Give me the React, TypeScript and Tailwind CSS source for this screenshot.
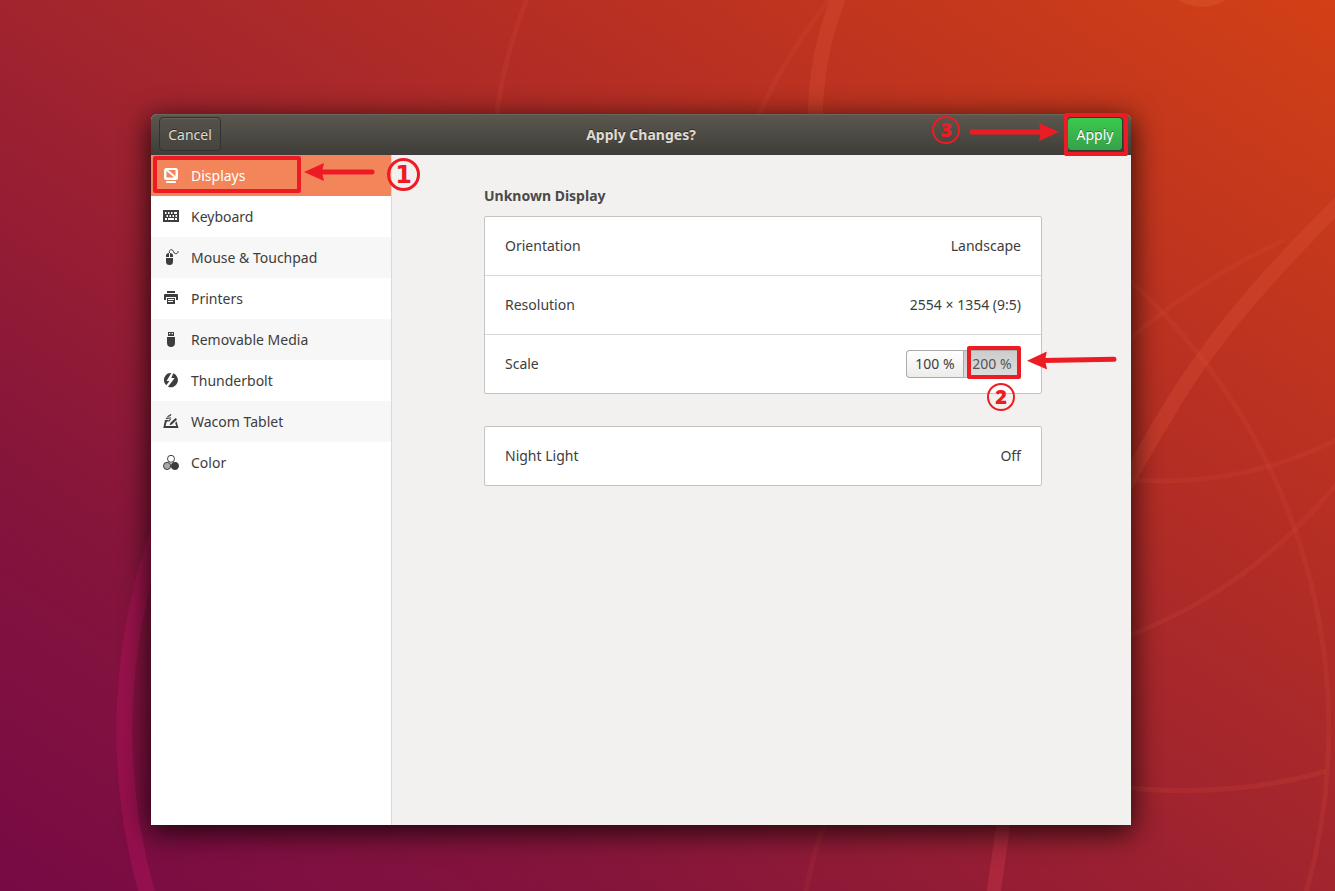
import React from "react";
import clsx from "clsx";

const DisplaysIcon = () => (
  <svg viewBox="0 0 16 16" className="w-4 h-4 -mt-px shrink-0" fill="currentColor">
    <path
      fillRule="evenodd"
      d="M3.500 1h9A2.500 2.500 0 0 1 15 3.500v7a2.500 2.500 0 0 1-2.500 2.500h-9A2.500 2.500 0 0 1 1 10.500v-7A2.500 2.500 0 0 1 3.500 1zM5.200 3l7.300 6V3zM3.500 4v6.500h7.600z"
    />
    <rect x="3" y="14" width="10" height="2" rx="0.6" />
  </svg>
);

const KeyboardIcon = () => (
  <svg viewBox="0 0 16 16" className="w-4 h-4 -mt-px shrink-0" fill="currentColor">
    <path
      fillRule="evenodd"
      d="M0 2h16v12H0zM2 4v2h1.500V4zM5 4v2h1.500V4zM8 4v2h1.500V4zM11 4v2h3V4zM3.500 7v2H5V7zM6.500 7v2H8V7zM9.500 7v2H11V7zM12.500 7v2H14V7zM2 10v2h2v-2zM5 10v2h6v-2zM12 10v2h2v-2z"
    />
  </svg>
);

const MouseIcon = () => (
  <svg viewBox="0 0 16 16" className="w-4 h-4 -mt-px shrink-0" fill="currentColor">
    <path d="M6 4v4H3V6.500C3 5 4.200 4 6 4zM7 4v4h3V6.500C10 5 8.800 4 7 4zM3 9h7v3.500a3.500 3.500 0 0 1-7 0z" />
    <path
      d="M6.500 4C5.800 1.500 7 .7 8.500.7c2.500 0 1.500 4 4.200 4 1.800 0 2.300-1 2.500-2.500"
      fill="none"
      stroke="currentColor"
    />
  </svg>
);

const PrinterIcon = () => (
  <svg viewBox="0 0 16 16" className="w-4 h-4 -mt-px shrink-0" fill="currentColor">
    <path d="M4 1h8v2H4zM2 4h12a1 1 0 0 1 1 1v5h-2V7H3v3H1V5a1 1 0 0 1 1-1z" />
    <path fillRule="evenodd" d="M4 8h8v6H4zM5 9v1h6V9zM5 11v1h5v-1z" />
  </svg>
);

const UsbIcon = () => (
  <svg viewBox="0 0 16 16" className="w-4 h-4 -mt-px shrink-0" fill="currentColor">
    <path fillRule="evenodd" d="M5 1h6v4H5zM6 2v1.200h1.300V2zM8.700 2v1.200H10V2z" />
    <path d="M4 6h8v6c0 2.500-1.600 4-4 4s-4-1.500-4-4z" />
  </svg>
);

const ThunderboltIcon = () => (
  <svg viewBox="0 0 16 16" className="w-4 h-4 -mt-px shrink-0" fill="currentColor">
    <path d="M8.300 1A7 7 0 0 0 3.300 13.200L6.500 9H3.600zM10.300 1.300L8.300 6h3.400L5 14.800A7 7 0 0 0 10.300 1.300z" />
  </svg>
);

const TabletIcon = () => (
  <svg viewBox="0 0 16 16" className="w-4 h-4 -mt-px shrink-0" fill="currentColor">
    <path
      fillRule="evenodd"
      d="M2 7h3.500v1.600H3.700L2.600 13h10.600l-1-3 1.300-1.700L15.500 15H.3z"
    />
    <path d="M12.500 5l1.500 1.400-5.200 5-2.200.8.700-2.200z" />
    <path
      d="M3 5.700c1.500-1.200 3.500.3 5-1.100M4.500 3.800C6 2.500 7 3.300 8 1.300M6.200 8.500c-.7-1.400.8-1.200 1.500-2.300"
      fill="none"
      stroke="currentColor"
      strokeWidth="1.200"
    />
  </svg>
);

const ColorIcon = () => (
  <svg viewBox="0 0 16 16" className="w-4 h-4 -mt-px shrink-0" stroke="currentColor">
    <circle cx="8" cy="4.800" r="3.500" fill="#fff" />
    <circle cx="4.100" cy="11.900" r="3.600" fill="#a9a9a9" />
    <circle cx="11.900" cy="11.900" r="3.600" fill="currentColor" />
  </svg>
);

const panels = [
  { name: "Displays", Icon: DisplaysIcon },
  { name: "Keyboard", Icon: KeyboardIcon },
  { name: "Mouse & Touchpad", Icon: MouseIcon },
  { name: "Printers", Icon: PrinterIcon },
  { name: "Removable Media", Icon: UsbIcon },
  { name: "Thunderbolt", Icon: ThunderboltIcon },
  { name: "Wacom Tablet", Icon: TabletIcon },
  { name: "Color", Icon: ColorIcon },
];

const Wallpaper = () => (
  <svg
    viewBox="0 0 1335 891"
    preserveAspectRatio="none"
    className="absolute inset-0 w-full h-full"
    fill="none"
    aria-hidden="true"
  >
    <g stroke="#dc5038" strokeOpacity="0.32" strokeWidth="15">
      <path d="M840-6C822 40 816 75 815 120" />
      <path d="M1342 201C1270 272 1215 335 1175 400S1030 640 1003 825" />
    </g>
    <path
      d="M1004 820L993 897"
      stroke="#c03244"
      strokeOpacity="0.5"
      strokeWidth="14"
    />
    <path
      d="M200 440A596 596 0 0 0 149 900"
      stroke="#ad1158"
      strokeOpacity="0.5"
      strokeWidth="16"
    />
    <g stroke="#d6493c" strokeOpacity="0.2" strokeWidth="5">
      <path d="M1120 272A604 604 0 0 1 1304 900" />
      <path d="M528-4Q504 55 496 120" />
      <path d="M832-4Q782 60 758 118" />
      <path d="M1120 479Q1240 490 1340 438" />
      <path d="M1120 639Q1250 592 1340 480" />
      <path d="M1120 787Q1230 799 1326 771" />
      <path d="M1120 348Q1190 284 1284 240" />
      <path d="M826 820Q814 850 805 896" strokeOpacity="0.12" />
    </g>
    <circle cx="1202" cy="-36" r="43" fill="#d94f26" fillOpacity="0.7" />
  </svg>
);

// Points right, rotate it for the other directions
const Arrow = ({ className }: { className: string }) => (
  <svg
    viewBox="0 0 90 18"
    className={clsx("absolute pointer-events-none z-10 w-[90px] h-[18px]", className)}
    aria-hidden="true"
  >
    <path d="M3 9H74" stroke="#ed1c24" strokeWidth="5" strokeLinecap="round" />
    <path d="M70 0L90 9L70 18L72 9z" fill="#ed1c24" />
  </svg>
);

const ShortArrow = ({ className }: { className: string }) => (
  <svg
    viewBox="0 0 72 18"
    className={clsx("absolute pointer-events-none z-10 w-[72px] h-[18px]", className)}
    aria-hidden="true"
  >
    <path d="M68 9H16" stroke="#ed1c24" strokeWidth="5" strokeLinecap="round" />
    <path d="M20 0L0 9L20 18L18 9z" fill="#ed1c24" />
  </svg>
);

const StepNumber = ({ n, className }: { n: number; className: string }) => (
  <span
    className={clsx(
      "absolute z-10 flex items-center justify-center rounded-full border-[#ed1c24] text-[#ed1c24] pointer-events-none",
      className
    )}
  >
    {n}
  </span>
);

const Highlight = ({ className }: { className: string }) => (
  <span
    className={clsx(
      "absolute z-10 rounded-xs border-4 border-[#ed1c24] pointer-events-none",
      className
    )}
  />
);

const Row = ({ label, children }: { label: string; children: React.ReactNode }) => (
  <div className="flex items-center justify-between h-[59px] px-5 border-b border-[#d8d8d8] last:h-[58px] last:border-b-0">
    <span>{label}</span>
    {children}
  </div>
);

const HeaderBar = () => (
  <header className="grid grid-cols-[1fr_auto_1fr] items-start h-[41px] px-2 pt-[3px] rounded-t-md bg-linear-to-b from-[#5c584f] to-[#3e3d39] shadow-[inset_0_1px_0_#69665e] text-[#dfdbd2]">
    <button className="h-[34px] w-[62px] pt-0.5 rounded-sm border border-[#32312d] bg-linear-to-b from-[#55524a] to-[#45443f] shadow-[inset_0_1px_0_#65625a] [text-shadow:0_-1px_#2b2a27]">
      Cancel
    </button>
    <h1 className="font-bold leading-9 [text-shadow:0_-1px_#2b2a27]">Apply Changes?</h1>
    <div className="relative justify-self-end">
      <button className="block h-[34px] w-14 pt-0.5 rounded-sm border border-[#2c3b2b] bg-linear-to-b from-[#3ac94e] to-[#37a14a] text-white [text-shadow:0_-1px_#2a7436]">
        Apply
      </button>
      <Highlight className="-left-[3px] -right-[5px] -top-1 -bottom-[5px]" />
      <Arrow className="right-[64px] top-[6px]" />
      <StepNumber n={3} className="w-7 h-7 right-[163px] -top-px border-2 text-xl font-black" />
    </div>
  </header>
);

const Sidebar = () => (
  <nav className="w-[241px] shrink-0 bg-white border-r border-[#dcdad7]">
    {panels.map(({ name, Icon }, i) => (
      <a
        key={name}
        href="#"
        className={clsx(
          "relative flex items-center h-[41px] px-3 gap-3",
          i === 0 ? "bg-[#f3855b] text-white" : i % 2 === 0 && "bg-[#f7f7f7]"
        )}
      >
        <Icon />
        {name}
        {i === 0 && (
          <>
            <Highlight className="left-[2px] top-px w-[148px] h-[37px]" />
            <ShortArrow className="left-[153px] top-[8px]" />
            <StepNumber
              n={1}
              className="w-[33px] h-[33px] left-[236px] top-[3px] border-3 text-2xl font-bold font-['DejaVu_Sans',sans-serif]"
            />
          </>
        )}
      </a>
    ))}
  </nav>
);

const DisplaySettings = () => (
  <main className="flex-1 pl-[92px] pr-[89px] pt-[31px]">
    <h2 className="font-bold leading-5 mb-[10px] text-[#4c4a48]">Unknown Display</h2>
    <section className="bg-white border border-[#c6c4c1] rounded-xs">
      <Row label="Orientation">
        <span>Landscape</span>
      </Row>
      <Row label="Resolution">
        <span>2554 × 1354 (9:5)</span>
      </Row>
      <Row label="Scale">
        <div className="relative flex h-7" role="group" aria-label="Scale">
          <button
            aria-pressed="false"
            className="w-[57px] rounded-l-sm border border-r-0 border-[#adaba8] bg-linear-to-b from-white to-[#ececeb]"
          >
            100 %
          </button>
          <button
            aria-pressed="true"
            className="w-[58px] rounded-r-sm border border-[#adaba8] bg-linear-to-b from-[#cdcdcd] to-[#dcdcdc] text-[#555]"
          >
            200 %
          </button>
          <Highlight className="left-[61px] right-0 -top-1 -bottom-px" />
          <Arrow className="rotate-179 left-[121px] top-px" />
          <StepNumber n={2} className="w-7 h-7 left-[81px] top-[33px] border-2 text-xl font-black" />
        </div>
      </Row>
    </section>
    <section className="mt-8 bg-white border border-[#c6c4c1] rounded-xs">
      <Row label="Night Light">
        <span>Off</span>
      </Row>
    </section>
  </main>
);

const App = () => {
  return (
    <div className="relative flex min-h-screen pt-[114px] pb-[66px] pl-[151px] pr-[204px] overflow-hidden bg-[linear-gradient(to_top_right,#770a45_0%,#86153b_24%,#a1242e_50%,#b83022_72%,#d24016_100%)] font-['Noto_Sans',sans-serif] text-sm text-[#3d3d3d]">
      <Wallpaper />
      <div className="relative flex flex-col flex-1 rounded-t-md bg-[#f2f1ef] shadow-[0_6px_28px_2px_rgba(0,0,0,0.75)]">
        <HeaderBar />
        <div className="flex flex-1">
          <Sidebar />
          <DisplaySettings />
        </div>
      </div>
    </div>
  );
};

export default App;
